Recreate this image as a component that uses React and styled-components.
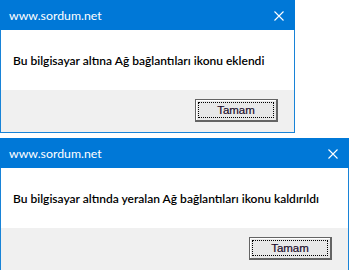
import React from "react";
import styled, { createGlobalStyle } from "styled-components";

const GlobalStyle = createGlobalStyle`
  html, body {
    margin: 0;
    padding: 0;
    background: #ffffff;
  }
  body {
    font-family: Lato, "Open Sans", sans-serif;
  }
`;

const Stack = styled.div`
  display: flex;
  flex-direction: column;
  gap: 5px;
`;

const Dialog = styled.div`
  width: ${(p) => p.width}px;
  box-sizing: border-box;
  border: 1px solid #1883d7;
  background: #ffffff;
  display: flex;
  flex-direction: column;
`;

const TitleBar = styled.div`
  height: 29px;
  margin: -1px -1px 0;
  background: #0078d7;
  display: flex;
  align-items: center;
  justify-content: space-between;
  padding: 1px 10px 0 9px;
`;

const Title = styled.span`
  color: #ffffff;
  font-size: 12.3px;
`;

const CloseIcon = styled.svg`
  width: 10px;
  height: 10px;
  margin-right: 1px;
`;

const Body = styled.div`
  height: 60px;
  box-sizing: border-box;
  padding: 23px 12px 0;
`;

const Message = styled.p`
  margin: 0;
  font-size: 12px;
  line-height: 15px;
  font-weight: 600;
  color: #000000;
  white-space: nowrap;
`;

const Footer = styled.div`
  height: 42px;
  box-sizing: border-box;
  background: #f0f0f0;
  display: flex;
  justify-content: flex-end;
  align-items: flex-start;
  padding: 9px 16px 0 0;
`;

const Button = styled.button`
  width: 83px;
  height: 23px;
  box-sizing: border-box;
  padding: 0;
  border: 1px solid #646464;
  border-right-width: 2px;
  border-bottom-width: 2px;
  background: #e8e8e8;
  box-shadow: inset 1px 1px 0 #ffffff;
  display: flex;
  align-items: stretch;
  font-family: "Liberation Sans", Arial, sans-serif;
  font-size: 11.5px;
  color: #1a0a2a;
  -webkit-text-stroke: 0.2px #1a0a2a;
`;

const Focus = styled.span`
  flex: 1;
  margin: 2px;
  border: 1px dotted #000000;
  display: flex;
  align-items: center;
  justify-content: center;
`;

function MessageBox({ width, text }) {
  return (
    <Dialog width={width}>
      <TitleBar>
        <Title>www.sordum.net</Title>
        <CloseIcon viewBox="0 0 10 10">
          <path d="M0.5 0.5 L9.5 9.5 M9.5 0.5 L0.5 9.5" stroke="#ffffff" strokeWidth="1.1" />
        </CloseIcon>
      </TitleBar>
      <Body>
        <Message>{text}</Message>
      </Body>
      <Footer>
        <Button>
          <Focus>Tamam</Focus>
        </Button>
      </Footer>
    </Dialog>
  );
}

export default function App() {
  return (
    <>
      <GlobalStyle />
      <Stack>
        <MessageBox width={295} text="Bu bilgisayar altına Ağ bağlantıları ikonu eklendi" />
        <MessageBox width={349} text="Bu bilgisayar altında yeralan Ağ bağlantıları ikonu kaldırıldı" />
      </Stack>
    </>
  );
}
